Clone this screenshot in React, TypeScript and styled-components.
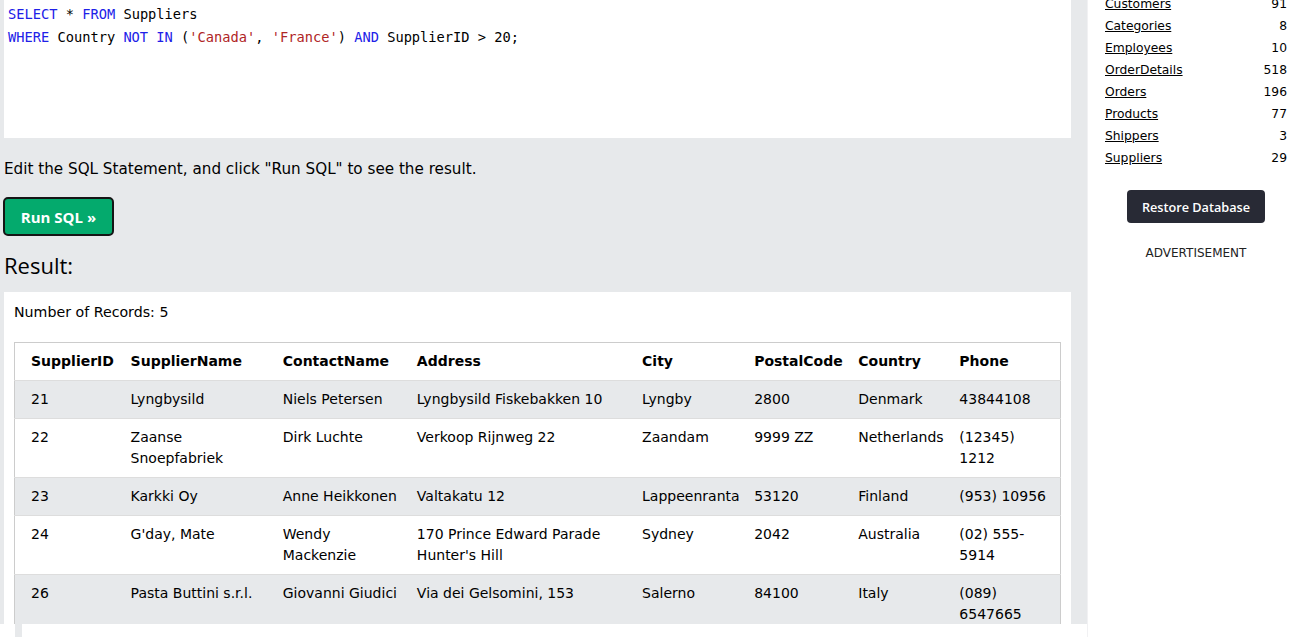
import React from "react";
import styled, { createGlobalStyle } from "styled-components";

const GlobalStyle = createGlobalStyle`
  html, body { margin: 0; padding: 0; background: #fff; }
  body { font-family: "DejaVu Sans", Verdana, sans-serif; color: #000; overflow: hidden; }
  * { box-sizing: border-box; }
`;

const Page = styled.div`
  display: flex;
  width: 1298px;
  height: 637px;
  overflow: hidden;
`;

const MainColumn = styled.div`
  display: flex;
  flex-direction: column;
  width: 1087px;
  flex-shrink: 0;
`;

const MainArea = styled.div`
  background: #e7e9eb;
  height: 624px;
  flex-shrink: 0;
  overflow: hidden;
  padding: 0 16px 0 4px;
  display: flex;
  flex-direction: column;
  & > * { flex-shrink: 0; }
`;

const Trailer = styled.div`
  height: 13px;
  flex-shrink: 0;
  display: flex;
`;

const TrailerBlock = styled.div`
  margin-left: 15px;
  width: 7px;
  background: #e7e9eb;
`;

const CodeBox = styled.div`
  background: #fff;
  height: 138px;
  padding: 3px 4px;
  font-family: "DejaVu Sans Mono", "Liberation Mono", monospace;
  font-size: 13.7px;
  line-height: 23px;
  color: #000;
  white-space: pre;
`;

const Tok = styled.span<{ $kind: "kw" | "str" | "plain" }>`
  color: ${(p) => (p.$kind === "kw" ? "#2020e8" : p.$kind === "str" ? "#b02525" : "#000")};
`;

const Hint = styled.p`
  margin: 21px 0 0 0;
  font-size: 15.2px;
  line-height: 20px;
`;

const RunButton = styled.button`
  margin-top: 18px;
  align-self: flex-start;
  width: 111px;
  height: 39px;
  background: #04aa6d;
  color: #fff;
  border: 2px solid #151515;
  border-radius: 5px;
  font-family: "Open Sans", "Liberation Sans", sans-serif;
  font-weight: 700;
  font-size: 15px;
  padding: 0;
  margin-left: -1px;
  cursor: pointer;
`;

const ResultTitle = styled.h2`
  margin: 14px 0 0 0;
  font-family: "Open Sans", "Liberation Sans", sans-serif;
  font-weight: 400;
  font-size: 22px;
  line-height: 30px;
`;

const ResultBox = styled.div`
  margin-top: 12px;
  background: #fff;
  padding: 10px 10px 0 10px;
  flex: 1 0 auto;
`;

const RecordCount = styled.div`
  font-size: 14.2px;
  line-height: 20px;
  margin-bottom: 20px;
`;

const Table = styled.table`
  border-collapse: collapse;
  table-layout: fixed;
  width: 1047px;
  border: 1px solid #ccc;
  font-size: 14px;
  line-height: 21px;
`;

const Col = styled.col<{ $w: number }>`
  width: ${(p) => p.$w}px;
`;

const HeadCell = styled.th`
  text-align: left;
  font-weight: 700;
  padding: 8px;
  vertical-align: top;
  &:first-child { padding-left: 16px; }
`;

const Row = styled.tr<{ $striped: boolean }>`
  background: ${(p) => (p.$striped ? "#e7e9eb" : "#fff")};
  border-bottom: 1px solid #dddddd;
`;

const HeadRow = styled.tr`
  background: #fff;
  border-bottom: 1px solid #dddddd;
`;

const Cell = styled.td`
  padding: 8px;
  vertical-align: top;
  &:first-child { padding-left: 16px; }
`;

const Sidebar = styled.aside`
  flex: 1;
  background: #fff;
  border-left: 1px solid #f1f1f3;
  padding: 0 11px 0 17px;
  display: flex;
  flex-direction: column;
`;

const TableList = styled.div`
  margin-top: -7px;
  display: flex;
  flex-direction: column;
`;

const ListRow = styled.div`
  display: flex;
  justify-content: space-between;
  align-items: center;
  height: 22px;
  font-size: 12.3px;
`;

const ListLink = styled.a`
  color: #000;
  text-decoration: underline;
`;

const RestoreButton = styled.button`
  align-self: center;
  margin-top: 21px;
  width: 138px;
  height: 33px;
  background: #282a35;
  color: #fff;
  border: none;
  border-radius: 4px;
  font-family: "Open Sans", "Liberation Sans", sans-serif;
  font-size: 12.7px;
  font-weight: 600;
  padding: 0;
`;

const AdLabel = styled.div`
  margin-top: 23px;
  text-align: center;
  font-size: 12px;
  color: #222;
`;

type Tk = [string, "kw" | "str" | "plain"];

const line1: Tk[] = [
  ["SELECT", "kw"], [" * ", "plain"], ["FROM", "kw"], [" Suppliers", "plain"],
];
const line2: Tk[] = [
  ["WHERE", "kw"], [" Country ", "plain"], ["NOT", "kw"], [" ", "plain"], ["IN", "kw"],
  [" (", "plain"], ["'Canada'", "str"], [", ", "plain"], ["'France'", "str"], [") ", "plain"],
  ["AND", "kw"], [" SupplierID > 20;", "plain"],
];

const columns: { name: string; w: number }[] = [
  { name: "SupplierID", w: 108 },
  { name: "SupplierName", w: 152 },
  { name: "ContactName", w: 134 },
  { name: "Address", w: 225 },
  { name: "City", w: 112 },
  { name: "PostalCode", w: 104 },
  { name: "Country", w: 101 },
  { name: "Phone", w: 109 },
];

const rows: string[][] = [
  ["21", "Lyngbysild", "Niels Petersen", "Lyngbysild Fiskebakken 10", "Lyngby", "2800", "Denmark", "43844108"],
  ["22", "Zaanse Snoepfabriek", "Dirk Luchte", "Verkoop Rijnweg 22", "Zaandam", "9999 ZZ", "Netherlands", "(12345) 1212"],
  ["23", "Karkki Oy", "Anne Heikkonen", "Valtakatu 12", "Lappeenranta", "53120", "Finland", "(953) 10956"],
  ["24", "G'day, Mate", "Wendy Mackenzie", "170 Prince Edward Parade Hunter's Hill", "Sydney", "2042", "Australia", "(02) 555-5914"],
  ["26", "Pasta Buttini s.r.l.", "Giovanni Giudici", "Via dei Gelsomini, 153", "Salerno", "84100", "Italy", "(089) 6547665"],
];

const dbTables: [string, number][] = [
  ["Customers", 91], ["Categories", 8], ["Employees", 10], ["OrderDetails", 518],
  ["Orders", 196], ["Products", 77], ["Shippers", 3], ["Suppliers", 29],
];

const renderLine = (tks: Tk[]) =>
  tks.map(([t, k], i) => (
    <Tok key={i} $kind={k}>{t}</Tok>
  ));

export default function App() {
  return (
    <>
      <GlobalStyle />
      <Page>
        <MainColumn>
          <MainArea>
            <CodeBox>
              {renderLine(line1)}
              {"\n"}
              {renderLine(line2)}
            </CodeBox>
            <Hint>Edit the SQL Statement, and click "Run SQL" to see the result.</Hint>
            <RunButton>Run SQL »</RunButton>
            <ResultTitle>Result:</ResultTitle>
            <ResultBox>
              <RecordCount>Number of Records: 5</RecordCount>
              <Table>
                <colgroup>
                  {columns.map((c) => (
                    <Col key={c.name} $w={c.w} />
                  ))}
                </colgroup>
                <thead>
                  <HeadRow>
                    {columns.map((c) => (
                      <HeadCell key={c.name}>{c.name}</HeadCell>
                    ))}
                  </HeadRow>
                </thead>
                <tbody>
                  {rows.map((r, i) => (
                    <Row key={r[0]} $striped={i % 2 === 0}>
                      {r.map((v, j) => (
                        <Cell key={j}>{v}</Cell>
                      ))}
                    </Row>
                  ))}
                </tbody>
              </Table>
            </ResultBox>
          </MainArea>
          <Trailer>
            <TrailerBlock />
          </Trailer>
        </MainColumn>
        <Sidebar>
          <TableList>
            {dbTables.map(([n, c]) => (
              <ListRow key={n}>
                <ListLink href="#">{n}</ListLink>
                <span>{c}</span>
              </ListRow>
            ))}
          </TableList>
          <RestoreButton>Restore Database</RestoreButton>
          <AdLabel>ADVERTISEMENT</AdLabel>
        </Sidebar>
      </Page>
    </>
  );
}
